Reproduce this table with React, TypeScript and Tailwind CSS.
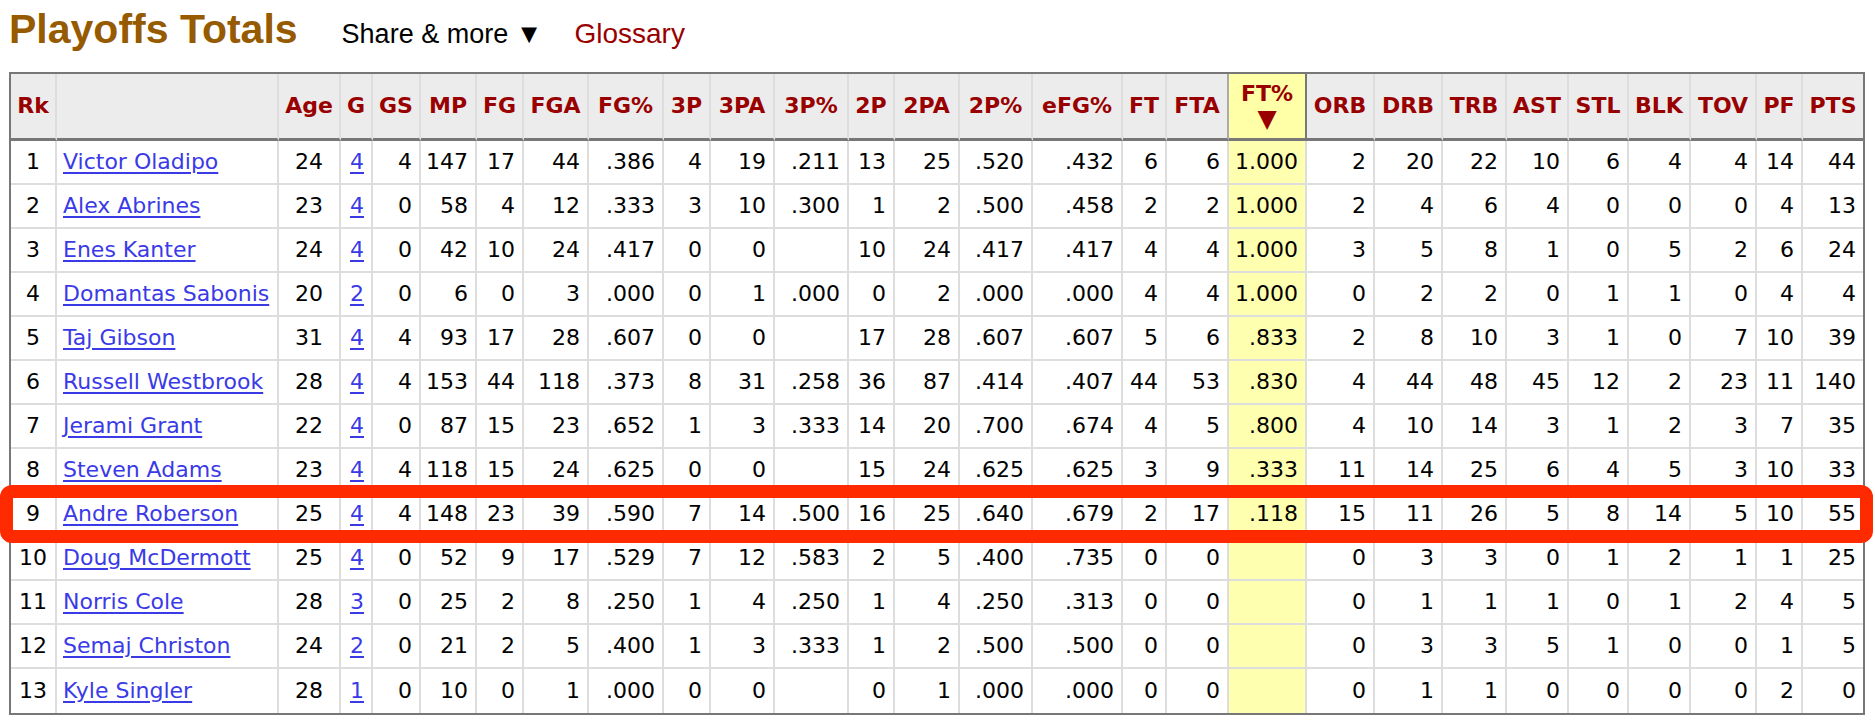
import React from 'react'

type Align = 'left' | 'center' | 'right'

interface Column {
  label: string
  width: number
  align: Align
  link?: boolean
}

const columns: Column[] = [
  { label: 'Rk', width: 46, align: 'center' },
  { label: '', width: 222, align: 'left', link: true },
  { label: 'Age', width: 62, align: 'center' },
  { label: 'G', width: 32, align: 'right', link: true },
  { label: 'GS', width: 48, align: 'right' },
  { label: 'MP', width: 56, align: 'right' },
  { label: 'FG', width: 47, align: 'right' },
  { label: 'FGA', width: 65, align: 'right' },
  { label: 'FG%', width: 75, align: 'right' },
  { label: '3P', width: 47, align: 'right' },
  { label: '3PA', width: 64, align: 'right' },
  { label: '3P%', width: 74, align: 'right' },
  { label: '2P', width: 46, align: 'right' },
  { label: '2PA', width: 65, align: 'right' },
  { label: '2P%', width: 73, align: 'right' },
  { label: 'eFG%', width: 90, align: 'right' },
  { label: 'FT', width: 44, align: 'right' },
  { label: 'FTA', width: 62, align: 'right' },
  { label: 'FT%', width: 78, align: 'right' },
  { label: 'ORB', width: 68, align: 'right' },
  { label: 'DRB', width: 68, align: 'right' },
  { label: 'TRB', width: 64, align: 'right' },
  { label: 'AST', width: 62, align: 'right' },
  { label: 'STL', width: 60, align: 'right' },
  { label: 'BLK', width: 62, align: 'right' },
  { label: 'TOV', width: 66, align: 'right' },
  { label: 'PF', width: 46, align: 'right' },
  { label: 'PTS', width: 60, align: 'right' },
]

const FT_PCT = 18

const rows: string[][] = [
  ['1', 'Victor Oladipo', '24', '4', '4', '147', '17', '44', '.386', '4', '19', '.211', '13', '25', '.520', '.432', '6', '6', '1.000', '2', '20', '22', '10', '6', '4', '4', '14', '44'],
  ['2', 'Alex Abrines', '23', '4', '0', '58', '4', '12', '.333', '3', '10', '.300', '1', '2', '.500', '.458', '2', '2', '1.000', '2', '4', '6', '4', '0', '0', '0', '4', '13'],
  ['3', 'Enes Kanter', '24', '4', '0', '42', '10', '24', '.417', '0', '0', '', '10', '24', '.417', '.417', '4', '4', '1.000', '3', '5', '8', '1', '0', '5', '2', '6', '24'],
  ['4', 'Domantas Sabonis', '20', '2', '0', '6', '0', '3', '.000', '0', '1', '.000', '0', '2', '.000', '.000', '4', '4', '1.000', '0', '2', '2', '0', '1', '1', '0', '4', '4'],
  ['5', 'Taj Gibson', '31', '4', '4', '93', '17', '28', '.607', '0', '0', '', '17', '28', '.607', '.607', '5', '6', '.833', '2', '8', '10', '3', '1', '0', '7', '10', '39'],
  ['6', 'Russell Westbrook', '28', '4', '4', '153', '44', '118', '.373', '8', '31', '.258', '36', '87', '.414', '.407', '44', '53', '.830', '4', '44', '48', '45', '12', '2', '23', '11', '140'],
  ['7', 'Jerami Grant', '22', '4', '0', '87', '15', '23', '.652', '1', '3', '.333', '14', '20', '.700', '.674', '4', '5', '.800', '4', '10', '14', '3', '1', '2', '3', '7', '35'],
  ['8', 'Steven Adams', '23', '4', '4', '118', '15', '24', '.625', '0', '0', '', '15', '24', '.625', '.625', '3', '9', '.333', '11', '14', '25', '6', '4', '5', '3', '10', '33'],
  ['9', 'Andre Roberson', '25', '4', '4', '148', '23', '39', '.590', '7', '14', '.500', '16', '25', '.640', '.679', '2', '17', '.118', '15', '11', '26', '5', '8', '14', '5', '10', '55'],
  ['10', 'Doug McDermott', '25', '4', '0', '52', '9', '17', '.529', '7', '12', '.583', '2', '5', '.400', '.735', '0', '0', '', '0', '3', '3', '0', '1', '2', '1', '1', '25'],
  ['11', 'Norris Cole', '28', '3', '0', '25', '2', '8', '.250', '1', '4', '.250', '1', '4', '.250', '.313', '0', '0', '', '0', '1', '1', '1', '0', '1', '2', '4', '5'],
  ['12', 'Semaj Christon', '24', '2', '0', '21', '2', '5', '.400', '1', '3', '.333', '1', '2', '.500', '.500', '0', '0', '', '0', '3', '3', '5', '1', '0', '0', '1', '5'],
  ['13', 'Kyle Singler', '28', '1', '0', '10', '0', '1', '.000', '0', '0', '', '0', '1', '.000', '.000', '0', '0', '', '0', '1', '1', '0', '0', '0', '0', '2', '0'],
]

const alignClass: Record<Align, string> = {
  left: 'text-left pl-[6px]',
  center: 'text-center',
  right: 'text-right pr-[7px]',
}

export default function App() {
  return (
    <div className="relative w-[1875px] h-[727px] overflow-hidden bg-white">
      <div className="flex items-baseline h-[72px] pl-[9px] pt-[9px] font-['Liberation_Sans',Arial,sans-serif]">
        <h2 className="text-[41px] font-bold leading-none text-[#965a00]">Playoffs Totals</h2>
        <span className="ml-[44px] text-[27px] leading-none text-black">Share &amp; more ▼</span>
        <span className="ml-[32px] text-[28px] leading-none text-[#990000]">Glossary</span>
      </div>

      <div className="ml-[9px] w-[1856px] border-2 border-[#777]">
        <table className="w-full table-fixed border-separate border-spacing-0 font-['DejaVu_Sans',Verdana,sans-serif] text-[22px]">
          <colgroup>
            {columns.map((c, i) => (
              <col key={i} style={{ width: c.width }} />
            ))}
          </colgroup>
          <thead>
            <tr>
              {columns.map((c, i) => (
                <th
                  key={i}
                  className={`h-[67px] p-0 text-center align-middle font-bold leading-[24px] text-[#990000] border-b-[3px] border-b-[#777] ${
                    i === columns.length - 1 ? '' : 'border-r-2'
                  } ${i === FT_PCT ? 'bg-[#ffffa8] border-r-[#777]' : i === FT_PCT - 1 ? 'bg-[#ececec] border-r-[#aaa]' : 'bg-[#ececec] border-r-[#ddd]'}`}
                >
                  {i === FT_PCT ? (
                    <div className="flex flex-col items-center">
                      <span className="leading-[24px]">FT%</span>
                      <span className="text-[25px] leading-[25px]">▼</span>
                    </div>
                  ) : (
                    c.label
                  )}
                </th>
              ))}
            </tr>
          </thead>
          <tbody>
            {rows.map((row, r) => (
              <tr key={r}>
                {row.map((cell, i) => {
                  const c = columns[i]
                  return (
                    <td
                      key={i}
                      className={`h-[44px] py-0 align-middle leading-none whitespace-nowrap text-black border-[#ddd] ${alignClass[c.align]} ${
                        i === columns.length - 1 ? '' : 'border-r-2'
                      } ${r === rows.length - 1 ? '' : 'border-b-2'} ${i === FT_PCT ? 'bg-[#ffffb0]' : ''}`}
                    >
                      {c.link ? (
                        <a href="#" className="text-[#3a3ae6] underline underline-offset-[3px]">
                          {cell}
                        </a>
                      ) : (
                        cell
                      )}
                    </td>
                  )
                })}
              </tr>
            ))}
          </tbody>
        </table>
      </div>

      <div className="pointer-events-none absolute left-0 top-[485px] h-[58px] w-[1873px] rounded-[12px] border-[13px] border-[#ff2a00]" />
    </div>
  )
}
